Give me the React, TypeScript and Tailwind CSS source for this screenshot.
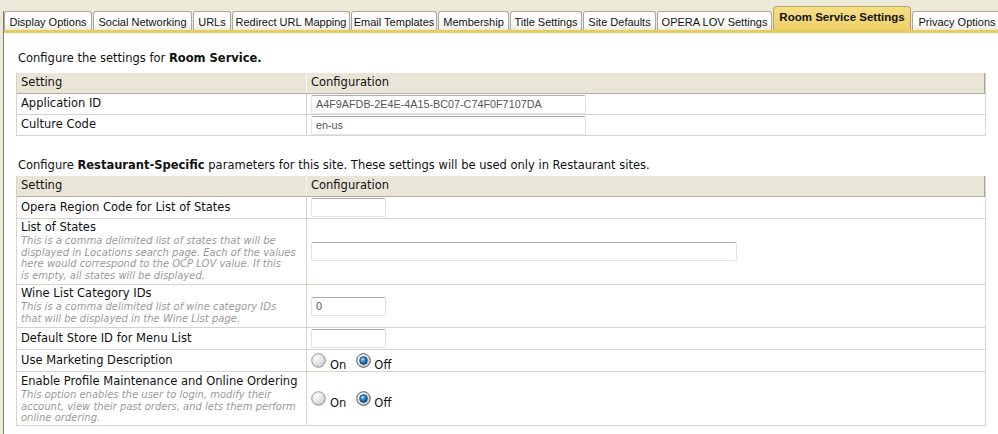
import React from "react";

const tabs: [string, number, boolean?][] = [
  ["Display Options", 88],
  ["Social Networking", 99],
  ["URLs", 38],
  ["Redirect URL Mapping", 118],
  ["Email Templates", 86],
  ["Membership", 71],
  ["Title Settings", 72],
  ["Site Defaults", 73],
  ["OPERA LOV Settings", 115],
  ["Room Service Settings", 138, true],
  ["Privacy Options", 90],
];

function Radio({ checked }: { checked?: boolean }) {
  return (
    <svg width="15" height="15" viewBox="0 0 15 15" className="shrink-0">
      <defs>
        <radialGradient id="rg-un" cx="0.35" cy="0.3" r="0.85">
          <stop offset="0" stopColor="#ffffff" />
          <stop offset="0.55" stopColor="#e2e2e2" />
          <stop offset="1" stopColor="#b9b9b9" />
        </radialGradient>
        <radialGradient id="rg-dot" cx="0.4" cy="0.35" r="0.7">
          <stop offset="0" stopColor="#c6efff" />
          <stop offset="0.35" stopColor="#3596dc" />
          <stop offset="1" stopColor="#083c70" />
        </radialGradient>
      </defs>
      <circle cx="7.5" cy="7.5" r="6.8" fill="url(#rg-un)" stroke={checked ? "#555" : "#979797"} strokeWidth="1" />
      {checked && <circle cx="7.5" cy="7.5" r="3.9" fill="url(#rg-dot)" stroke="#0d3559" strokeWidth="0.6" />}
    </svg>
  );
}

function RadioGroup() {
  return (
    <div className="flex items-start">
      <Radio />
      <span className="mt-[5px] ml-[4px] leading-[14px]">On</span>
      <span className="ml-[10px] flex items-start">
        <Radio checked />
        <span className="mt-[5px] ml-[3px] leading-[14px]">Off</span>
      </span>
    </div>
  );
}

function TextBox({ w, value }: { w: number; value?: string }) {
  return (
    <div
      style={{ width: w }}
      className="h-[19px] border border-[#dfe3e8] border-t-[#a9aeb5] rounded-[2px] bg-white px-[4px] text-[10.8px] leading-[17px] text-[#555] font-['Liberation_Sans',Arial,sans-serif] whitespace-nowrap overflow-hidden"
    >
      {value}
    </div>
  );
}

function Desc({ lines }: { lines: string[] }) {
  return (
    <div className="mt-[1px] italic text-[10px] leading-[11.7px] text-[#9a9a9a] whitespace-nowrap">
      {lines.map((d, i) => (
        <div key={i}>{d}</div>
      ))}
    </div>
  );
}

function Head() {
  return (
    <div className="h-[21px] flex bg-[#e9e6d8] border-b border-[#b3b0a2] border-r border-r-[#a9a697]">
      <div className="w-[289px] pl-[4px] flex items-center">Setting</div>
      <div className="flex-1 pl-[4px] flex items-center border-l border-[#fbfaf5]">Configuration</div>
    </div>
  );
}

function Row({
  h,
  left,
  right,
  multi,
  rightClass = "items-center",
}: {
  h: number;
  left: React.ReactNode;
  right: React.ReactNode;
  multi?: boolean;
  rightClass?: string;
}) {
  return (
    <div style={{ height: h }} className="flex border-b border-[#d8d4cb]">
      <div className={"w-[289px] pl-[4px] flex " + (multi ? "flex-col pt-[1px]" : "items-center")}>{left}</div>
      <div className={"flex-1 pl-[4px] flex border-l border-[#d8d4cb] " + rightClass}>{right}</div>
    </div>
  );
}

export default function App() {
  const table = "w-[970px] border-l border-r border-[#d8d4cb]";
  return (
    <div className="w-[998px] h-[434px] overflow-hidden bg-[#ECE9D8] pt-[11px] font-['DejaVu_Sans',Verdana,sans-serif] text-[11.5px] text-[#111]">
      <div className="ml-[3px] h-full border-l border-[#7d7d7d] bg-white">
        <div className="h-[19px] flex items-end gap-[1px] bg-[#ECE9D8] font-['Liberation_Sans',Arial,sans-serif]">
          {tabs.map(([name, w, active]) =>
            active ? (
              <div
                key={name}
                style={{ width: w }}
                className="shrink-0 h-[24px] -mt-[5px] rounded-t-[4px] border border-b-0 border-[#b6a46a] bg-gradient-to-b from-[#f7df86] to-[#efd067] flex items-center justify-center text-[11.5px] font-bold text-[#111] pb-[2px]"
              >
                {name}
              </div>
            ) : (
              <div
                key={name}
                style={{ width: w }}
                className="shrink-0 h-[19px] rounded-t-[3px] border border-b-0 border-[#a9a8a2] bg-gradient-to-b from-white from-60% to-[#eeebdd] flex items-center justify-center text-[11px] text-[#111] pt-[2px]"
              >
                {name}
              </div>
            )
          )}
        </div>
        <div className="h-[3px] bg-[#e5cc5e]" />
        <div className="pl-[12px]">
          <div className="mt-[18px] pl-[2px] leading-[14px]">
            Configure the settings for <b>Room Service.</b>
          </div>
          <div className={"mt-[8px] " + table}>
            <Head />
            <Row h={21} left="Application ID" right={<TextBox w={275} value="A4F9AFDB-2E4E-4A15-BC07-C74F0F7107DA" />} />
            <Row h={21} left="Culture Code" right={<TextBox w={275} value="en-us" />} />
          </div>

          <div className="mt-[22px] pl-[2px] leading-[14px]">
            Configure <b>Restaurant-Specific</b> parameters for this site. These settings will be used only in Restaurant sites.
          </div>
          <div className={"mt-[4px] " + table}>
            <Head />
            <Row h={22} left="Opera Region Code for List of States" right={<TextBox w={75} />} />
            <Row
              h={66}
              multi
              left={
                <>
                  <div className="leading-[14px]">List of States</div>
                  <Desc
                    lines={[
                      "This is a comma delimited list of states that will be",
                      "displayed in Locations search page. Each of the values",
                      "here would correspond to the OCP LOV value. If this",
                      "is empty, all states will be displayed.",
                    ]}
                  />
                </>
              }
              right={<TextBox w={426} />}
            />
            <Row
              h={43}
              multi
              left={
                <>
                  <div className="leading-[14px]">Wine List Category IDs</div>
                  <Desc
                    lines={[
                      "This is a comma delimited list of wine category IDs",
                      "that will be displayed in the Wine List page.",
                    ]}
                  />
                </>
              }
              right={<TextBox w={75} value="0" />}
            />
            <Row h={22} left="Default Store ID for Menu List" right={<TextBox w={75} />} />
            <Row h={22} left="Use Marketing Description" right={<RadioGroup />} rightClass="items-start pt-[3px]" />
            <Row
              h={54}
              multi
              left={
                <>
                  <div className="leading-[14px] mt-[1px]">Enable Profile Maintenance and Online Ordering</div>
                  <Desc
                    lines={[
                      "This option enables the user to login, modify their",
                      "account, view their past orders, and lets them perform",
                      "online ordering.",
                    ]}
                  />
                </>
              }
              right={<RadioGroup />}
              rightClass="items-center pt-[3px]"
            />
          </div>
        </div>
      </div>
    </div>
  );
}
